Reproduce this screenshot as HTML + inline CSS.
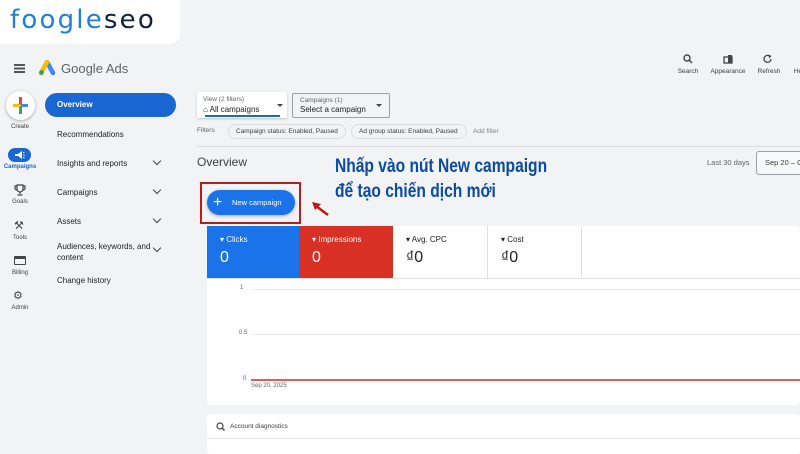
<!DOCTYPE html>
<html><head><meta charset="utf-8"><style>
*{margin:0;padding:0;box-sizing:border-box}
body{width:800px;height:450px;overflow:hidden;background:#f1f3f4;font-family:"Liberation Sans",sans-serif;position:relative;color:#202124}
.a{position:absolute}
.nav{position:absolute;left:57px;font-size:8px;color:#202124}
.chev{position:absolute;left:154px;width:6px;height:6px;border-right:1.3px solid #444;border-bottom:1.3px solid #444;transform:rotate(45deg)}
.lab{position:absolute;font-size:6px;color:#3c4043;width:40px;text-align:center;left:0}
.tl{position:absolute;font-size:6.5px;color:#3c4043;text-align:center;width:40px}
.chip{position:absolute;top:124px;height:15px;border:1px solid #dadce0;border-radius:8px;font-size:6.5px;color:#3c4043;line-height:13px;padding:0 7px;background:#f1f3f4}
.m{position:absolute;top:226px;height:52px;padding:9px 0 0 13px;font-size:8px}
.m b{display:block;font-weight:normal;font-size:16px;margin-top:5px}
.ann{position:absolute;left:335px;font-family:"Liberation Sans Narrow","Liberation Sans",sans-serif;font-weight:bold;color:#0b4aa6;font-size:19px;transform:scaleX(.82);transform-origin:left;white-space:nowrap}
</style></head><body>
<div class="a" style="left:0;top:0;width:180px;height:44px;background:#fff;border-bottom-right-radius:10px"></div>
<div class="a" style="left:10px;top:5px;font-size:26px;letter-spacing:2.2px;line-height:30px;font-family:'DejaVu Sans','Liberation Sans',sans-serif"><span style="color:#1f7fe0">foogle</span><span style="color:#10203f">seo</span></div>
<div class="a" style="left:14px;top:64px;width:11px;height:1.5px;background:#555;box-shadow:0 3.5px 0 #555,0 7px 0 #555"></div>
<svg class="a" style="left:38px;top:60px" width="18" height="16" viewBox="0 0 18 16"><path d="M9 2 L15 13" stroke="#4285f4" stroke-width="4.5" stroke-linecap="round"/><path d="M9 2 L3 13" stroke="#fbbc04" stroke-width="4.5" stroke-linecap="round"/><circle cx="3.5" cy="12.5" r="2.4" fill="#34a853"/></svg>
<div class="a" style="left:61px;top:61px;font-size:13px;color:#5f6368">Google Ads</div>
<svg class="a" style="left:683px;top:54px" width="10" height="10"><circle cx="4" cy="4" r="3" fill="none" stroke="#444" stroke-width="1.4"/><path d="M6 6 L9 9" stroke="#444" stroke-width="1.5"/></svg>
<svg class="a" style="left:723px;top:54px" width="10" height="10"><rect x="1" y="3" width="8" height="6" fill="none" stroke="#444" stroke-width="1.3"/><rect x="5" y="1" width="4" height="8" fill="#444"/></svg>
<svg class="a" style="left:763px;top:54px" width="10" height="10"><path d="M8 5 A3.5 3.5 0 1 1 6.5 2" fill="none" stroke="#444" stroke-width="1.3"/><path d="M5.5 0.5 L8.5 2 L6 4.5Z" fill="#444"/></svg>
<div class="tl" style="left:668px;top:68px">Search</div>
<div class="tl" style="left:708px;top:68px">Appearance</div>
<div class="tl" style="left:749px;top:68px">Refresh</div>
<div class="tl" style="left:778px;top:68px">He</div>
<div class="a" style="left:6px;top:91px;width:29px;height:29px;border-radius:50%;background:#fff;box-shadow:0 1px 3px rgba(0,0,0,.3)"></div>
<div class="a" style="left:19px;top:97px;width:3px;height:8px;background:#ea4335"></div>
<div class="a" style="left:19px;top:106px;width:3px;height:8px;background:#34a853"></div>
<div class="a" style="left:13px;top:104px;width:7px;height:3px;background:#fbbc04"></div>
<div class="a" style="left:21px;top:104px;width:7px;height:3px;background:#4285f4"></div>
<div class="lab" style="top:124px">Create</div>
<div class="a" style="left:8px;top:148px;width:23px;height:14px;border-radius:7px;background:#1a66d2"></div>
<svg class="a" style="left:14px;top:150px" width="11" height="10"><path d="M1 4 H4 L8 1 V9 L4 6 H1Z" fill="#fff"/><path d="M9 3 L10.5 2 M9 5 H11 M9 7 L10.5 8" stroke="#fff" stroke-width="0.8"/></svg>
<div class="lab" style="top:164px;color:#1a66d2;font-weight:bold">Campaigns</div>
<svg class="a" style="left:14px;top:184px" width="12" height="12"><path d="M3 1 H9 V5 A3 3 0 0 1 3 5Z M3 2 H1 V4 Q1 6 3.5 6 M9 2 H11 V4 Q11 6 8.5 6 M6 8 V10 M3.5 11 H8.5" fill="none" stroke="#444" stroke-width="1.2"/></svg>
<div class="lab" style="top:199px">Goals</div>
<div class="a" style="left:14px;top:219px;font-size:11px;color:#444">⚒</div>
<div class="lab" style="top:235px">Tools</div>
<div class="a" style="left:14px;top:256px;width:12px;height:9px;border:1.3px solid #444;border-top-width:3px;border-radius:1px"></div>
<div class="lab" style="top:270px">Billing</div>
<div class="a" style="left:13px;top:289px;font-size:11px;color:#444">⚙</div>
<div class="lab" style="top:305px">Admin</div>
<div class="a" style="left:45px;top:93px;width:131px;height:24px;border-radius:12px;background:#1a66d2"></div>
<div class="nav" style="top:100px;color:#fff;font-weight:bold">Overview</div>
<div class="nav" style="top:130px">Recommendations</div>
<div class="nav" style="top:159px">Insights and reports</div><div class="chev" style="top:158px"></div>
<div class="nav" style="top:188px">Campaigns</div><div class="chev" style="top:187px"></div>
<div class="nav" style="top:217px">Assets</div><div class="chev" style="top:216px"></div>
<div class="nav" style="top:241px;line-height:11px">Audiences, keywords, and<br>content</div><div class="chev" style="top:245px"></div>
<div class="nav" style="top:276px">Change history</div>
<div class="a" style="left:197px;top:92px;width:90px;height:26px;background:#fff;border-radius:2px;box-shadow:0 1px 2px rgba(0,0,0,.2)"></div>
<div class="a" style="left:203px;top:96px;font-size:6.5px;color:#5f6368">View (2 filters)</div>
<div class="a" style="left:203px;top:105px;font-size:8px">⌂ All campaigns</div>
<div class="a" style="left:205px;top:115px;width:75px;height:1.5px;background:#1a66d2"></div>
<div class="a" style="left:277px;top:104px;border:3px solid transparent;border-top:3.5px solid #444"></div>
<div class="a" style="left:292px;top:93px;width:98px;height:25px;border:1px solid #9aa0a6;border-radius:2px"></div>
<div class="a" style="left:300px;top:97px;font-size:6.5px;color:#5f6368">Campaigns (1)</div>
<div class="a" style="left:300px;top:105px;font-size:8px">Select a campaign</div>
<div class="a" style="left:376px;top:104px;border:3px solid transparent;border-top:3.5px solid #444"></div>
<div class="a" style="left:197px;top:127px;font-size:6.5px;color:#5f6368">Filters</div>
<div class="chip" style="left:228px;width:118px">Campaign status: Enabled, Paused</div>
<div class="chip" style="left:351px;width:116px">Ad group status: Enabled, Paused</div>
<div class="a" style="left:473px;top:128px;font-size:6.5px;color:#80868b">Add filter</div>
<div class="a" style="left:197px;top:146px;width:603px;height:1px;background:#dadce0"></div>
<div class="a" style="left:197px;top:155px;font-size:12px;color:#3c4043">Overview</div>
<div class="a" style="left:707px;top:158px;font-size:7.5px;color:#5f6368">Last 30 days</div>
<div class="a" style="left:756px;top:151px;width:50px;height:24px;border:1px solid #9aa0a6;border-radius:3px;background:#f8f9fa;font-size:7.5px;line-height:22px;padding-left:8px;color:#3c4043">Sep 20 – O</div>
<div class="ann" style="top:156px">Nhấp vào nút New campaign</div>
<div class="ann" style="top:181px">để tạo chiến dịch mới</div>
<div class="a" style="left:200px;top:182px;width:101px;height:42px;border:2.5px solid #b71c1c"></div>
<div class="a" style="left:207px;top:190px;width:88px;height:25px;border-radius:13px;background:#1a73e8;box-shadow:0 1px 3px rgba(0,0,0,.3);color:#fff;font-size:7.5px;line-height:25px;padding-left:25px">New campaign</div>
<div class="a" style="left:213px;top:190px;color:#fff;font-size:16px;line-height:25px">+</div>
<svg class="a" style="left:308px;top:199px" width="24" height="20"><path d="M20 16 L8 7" stroke="#c01818" stroke-width="2.5"/><path d="M4 3 L13 5 L7 11Z" fill="#c01818"/></svg>
<div class="a" style="left:207px;top:226px;width:593px;height:179px;background:#fff;border-radius:4px"></div>
<div class="m" style="left:207px;width:92px;background:#1a73e8;color:#fff">▾ Clicks<b>0</b></div>
<div class="m" style="left:299px;width:94px;background:#d93025;color:#fff">▾ Impressions<b>0</b></div>
<div class="m" style="left:393px;width:95px;border-right:1px solid #e0e0e0">▾ Avg. CPC<b>₫0</b></div>
<div class="m" style="left:488px;width:94px;border-right:1px solid #e0e0e0">▾ Cost<b>₫0</b></div>
<div class="a" style="left:207px;top:278px;width:593px;height:1px;background:#e0e0e0"></div>
<div class="a" style="left:240px;top:285px;font-size:6px;color:#5f6368">1</div>
<div class="a" style="left:239px;top:330px;font-size:6px;color:#5f6368">0.5</div>
<div class="a" style="left:243px;top:376px;font-size:6px;color:#5f6368">0</div>
<div class="a" style="left:251px;top:289px;width:549px;height:1px;background:#e8eaed"></div>
<div class="a" style="left:251px;top:334px;width:549px;height:1px;background:#e8eaed"></div>
<div class="a" style="left:251px;top:379px;width:549px;height:1.5px;background:#e06055"></div>
<div class="a" style="left:251px;top:383px;font-size:6px;color:#5f6368">Sep 20, 2025</div>
<div class="a" style="left:207px;top:414px;width:593px;height:40px;background:#fff;border-radius:4px"></div>
<div class="a" style="left:207px;top:438px;width:593px;height:1px;background:#e8eaed"></div>
<svg class="a" style="left:216px;top:422px" width="9" height="9"><circle cx="4" cy="4" r="3" fill="none" stroke="#444" stroke-width="1.2"/><path d="M6 6 L8.5 8.5" stroke="#444" stroke-width="1.3"/></svg>
<div class="a" style="left:230px;top:423px;font-size:6.5px;color:#3c4043">Account diagnostics</div>
</body></html>
